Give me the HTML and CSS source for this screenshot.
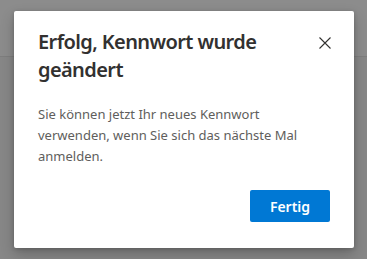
FILE: index.html
```html
<!DOCTYPE html>
<html lang="de">
<head>
    <meta charset="UTF-8">
    <meta name="viewport" content="width=device-width, initial-scale=1.0">
    <title>Kennwort geändert</title>
    <link rel="stylesheet" href="styles.css">
</head>
<body>
    <div class="page">
        <div class="page-header"></div>

        <div class="dialog" role="dialog">
            <div class="dialog-head">
                <h2 class="dialog-title">Erfolg, Kennwort wurde geändert</h2>
                <button class="close-button" aria-label="Schließen">
                    <svg width="12" height="12" viewBox="0 0 12 12">
                        <path d="M0.5 0.5 L11.5 11.5 M11.5 0.5 L0.5 11.5" stroke="#323130" stroke-width="1.1" fill="none"/>
                    </svg>
                </button>
            </div>
            <p class="dialog-text">Sie können jetzt Ihr neues Kennwort verwenden, wenn Sie sich das nächste Mal anmelden.</p>
            <div class="dialog-footer">
                <button class="primary-button">Fertig</button>
            </div>
        </div>
    </div>
</body>
</html>
```

FILE: styles.css
```css
body {
    margin: 0;
    padding: 0;
    font-family: 'Noto Sans', 'Open Sans', Arial, sans-serif;
    background: #878787;
}
.page {
    position: relative;
    width: 367px;
    height: 259px;
    overflow: hidden;
}
.page-header {
    height: 56px;
    background: #8c8c8c;
    border-bottom: 1px solid #7e7e7e;
}
.dialog {
    position: absolute;
    left: 14px;
    top: 11px;
    width: 340px;
    height: 237px;
    box-sizing: border-box;
    padding: 17px 24px 26px 24px;
    background: #fff;
    border-radius: 2px;
    box-shadow: 0 6px 14px rgba(0,0,0,0.22), 0 1px 4px rgba(0,0,0,0.18);
    display: flex;
    flex-direction: column;
}
.dialog-head {
    display: flex;
    justify-content: space-between;
    align-items: flex-start;
}
.dialog-title {
    margin: 0;
    width: 250px;
    font-size: 20px;
    line-height: 28px;
    font-weight: 600;
    letter-spacing: -0.6px;
    color: #323130;
}
.close-button {
    margin: 9px -1px 0 0;
    padding: 0;
    border: none;
    background: none;
    width: 12px;
    height: 12px;
    display: flex;
}
.dialog-text {
    margin: 20px 0 0 0;
    font-size: 13px;
    line-height: 21px;
    color: #605e5c;
}
.dialog-footer {
    margin-top: auto;
    display: flex;
    justify-content: flex-end;
}
.primary-button {
    width: 80px;
    height: 32px;
    border: none;
    border-radius: 2px;
    background: #0078d4;
    color: #fff;
    font-family: inherit;
    font-size: 14px;
    font-weight: 600;
}
```
